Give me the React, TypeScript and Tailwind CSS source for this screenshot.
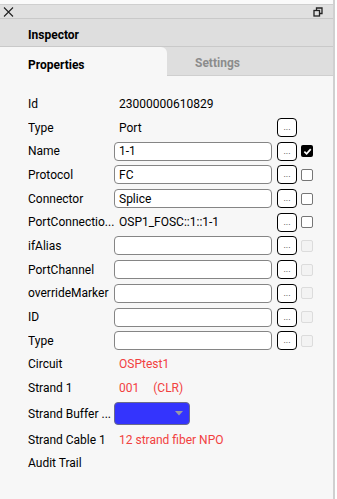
import { useState } from "react"

type Row = {
    label: string
    kind: "text" | "input" | "red"
    value?: string
    button?: boolean
    check?: "on" | "off" | "disabled"
}

const rows: Row[] = [
    { label: "Id", kind: "text", value: "23000000610829" },
    { label: "Type", kind: "text", value: "Port", button: true },
    { label: "Name", kind: "input", value: "1-1", button: true, check: "on" },
    { label: "Protocol", kind: "input", value: "FC", button: true, check: "off" },
    { label: "Connector", kind: "input", value: "Splice", button: true, check: "off" },
    { label: "PortConnectio...", kind: "text", value: "OSP1_FOSC::1::1-1", button: true, check: "off" },
    { label: "ifAlias", kind: "input", value: "", button: true, check: "disabled" },
    { label: "PortChannel", kind: "input", value: "", button: true, check: "disabled" },
    { label: "overrideMarker", kind: "input", value: "", button: true, check: "disabled" },
    { label: "ID", kind: "input", value: "", button: true, check: "disabled" },
    { label: "Type", kind: "input", value: "", button: true, check: "disabled" },
    { label: "Circuit", kind: "red", value: "OSPtest1" },
]

function Check({ state }: { state: "on" | "off" | "disabled" }) {
    if (state === "on") {
        return (
            <div className="w-[12px] h-[12px] rounded-[2px] bg-black flex items-center justify-center">
                <svg width="9" height="9" viewBox="0 0 10 10">
                    <path d="M1.5 5.2 L4 7.6 L8.6 2.4" stroke="white" strokeWidth="1.9" fill="none" />
                </svg>
            </div>
        )
    }
    if (state === "off") {
        return <div className="w-[12px] h-[12px] rounded-[2px] border border-[#767676] bg-white" />
    }
    return <div className="w-[12px] h-[12px] rounded-[2px] border border-[#dcdcdc] bg-[#f3f3f3]" />
}

function DotsButton() {
    return (
        <div className="w-[20px] h-[19px] rounded-[4px] border border-black bg-white flex items-end justify-center pb-[4px] text-[9px] leading-none text-[#333]">
            ...
        </div>
    )
}

export default function App() {
    const [tab] = useState("properties")

    return (
        <div className="w-[337px] h-[499px] bg-white overflow-hidden" style={{ fontFamily: "Roboto, 'Liberation Sans', sans-serif" }}>
            <div className="w-[335px] h-full flex flex-col bg-[#f7f7f7] border-r-2 border-[#d0d0d0]">
                <div className="h-[5px] bg-[#fafafa] border-b border-[#cfcfcf] shrink-0" />
                <div className="h-[14px] bg-[#e0e0e0] border-b border-[#c9c9c9] flex items-center justify-between pl-[3px] pr-[10px] shrink-0">
                    <svg width="11" height="10" viewBox="0 0 11 10">
                        <path d="M1 0.5 L10 9.5 M10 0.5 L1 9.5" stroke="#222" strokeWidth="1.1" />
                    </svg>
                    <svg width="10" height="10" viewBox="0 0 10 10">
                        <rect x="1" y="3.5" width="5.5" height="5.5" fill="none" stroke="#222" strokeWidth="1.3" />
                        <path d="M3.5 3.5 V1 H9 V6.5 H6.5" fill="none" stroke="#222" strokeWidth="1.3" />
                    </svg>
                </div>
                <div className="h-[28px] bg-[#dedede] border-b border-[#c9c9c9] flex items-center pl-[28px] pt-[4px] text-[12px] font-bold text-black shrink-0">
                    Inspector
                </div>
                <div className="h-[29px] flex bg-[#dedede] shrink-0">
                    <div className={`w-[167px] rounded-tr-[6px] flex items-center pl-[28px] pt-[6px] text-[12px] font-bold ${tab === "properties" ? "bg-[#f7f7f7] text-black" : "text-[#8a8a8a]"}`}>
                        Properties
                    </div>
                    <div className="flex-1 flex items-center pl-[28px] pt-[3px] text-[12px] font-bold text-[#8c8c8c] border-b border-[#cfcfcf]">
                        Settings
                    </div>
                </div>

                <div className="flex flex-col pl-[28px] pt-[16px] text-[12px] text-black">
                    {rows.map((r, i) => (
                        <div key={i} className="h-[23.7px] flex items-center">
                            <div className="w-[86px] shrink-0 whitespace-nowrap overflow-hidden">{r.label}</div>
                            {r.kind === "input" ? (
                                <div className="w-[158px] h-[19px] rounded-[4px] border border-[#858585] bg-white flex items-center px-[4px] shrink-0">
                                    {r.value}
                                </div>
                            ) : (
                                <div className={`w-[158px] pl-[5px] shrink-0 whitespace-nowrap ${r.kind === "red" ? "text-[#f2413f]" : ""}`}>
                                    {r.value}
                                </div>
                            )}
                            {r.button && (
                                <div className="ml-[5px]">
                                    <DotsButton />
                                </div>
                            )}
                            {r.check && (
                                <div className="ml-[4px]">
                                    <Check state={r.check} />
                                </div>
                            )}
                        </div>
                    ))}
                    <div className="h-[23.7px] flex items-center">
                        <div className="w-[86px] shrink-0">Strand 1</div>
                        <div className="pl-[5px] text-[#f2413f] whitespace-nowrap">
                            001<span className="ml-[14px]">(CLR)</span>
                        </div>
                    </div>
                    <div className="h-[28px] flex items-center">
                        <div className="w-[86px] shrink-0 whitespace-nowrap overflow-hidden">Strand Buffer ...</div>
                        <div className="w-[76px] h-[23px] rounded-[4px] border border-[#6b6b8a] bg-[#3434fd] flex items-center justify-end pr-[6px]">
                            <svg width="8" height="5" viewBox="0 0 8 5">
                                <path d="M0 0 H8 L4 4.5 Z" fill="#9a9aa6" />
                            </svg>
                        </div>
                    </div>
                    <div className="h-[23.7px] flex items-center">
                        <div className="w-[86px] shrink-0">Strand Cable 1</div>
                        <div className="pl-[5px] text-[#f2413f] whitespace-nowrap">12 strand fiber NPO</div>
                    </div>
                    <div className="h-[23.7px] flex items-center">
                        <div className="w-[86px] shrink-0">Audit Trail</div>
                    </div>
                </div>
            </div>
        </div>
    )
}
